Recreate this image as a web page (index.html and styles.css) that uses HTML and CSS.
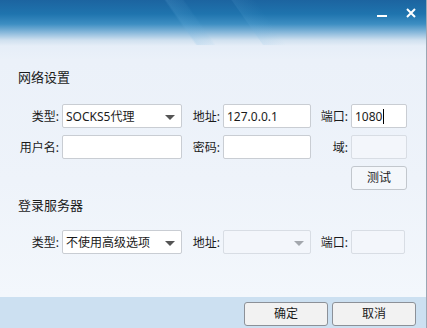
FILE: index.html
```html
<!DOCTYPE html>
<html>
<head>
    <meta charset="utf-8">
    <title>代理设置</title>
    <link rel="stylesheet" href="styles.css">
</head>
<body>
    <div class="window">
        <div class="titlebar">
            <span class="tb-min"></span>
            <svg class="tb-close" width="10" height="10" viewBox="0 0 10 10">
                <path d="M1 1 L9 9 M9 1 L1 9" stroke="#fff" stroke-width="2" fill="none"/>
            </svg>
        </div>
        <div class="content">
            <div class="section-title first">网络设置</div>
            <div class="form-grid">
                <span class="label">类型:</span>
                <div class="field select"><span class="value">SOCKS5代理</span><i class="arrow"></i></div>
                <span class="label">地址:</span>
                <div class="field"><span class="value">127.0.0.1</span></div>
                <span class="label">端口:</span>
                <div class="field"><span class="value">1080</span><span class="caret"></span></div>

                <span class="label">用户名:</span>
                <div class="field"></div>
                <span class="label">密码:</span>
                <div class="field"></div>
                <span class="label">域:</span>
                <div class="field disabled"></div>

                <div class="btn-test">测试</div>
            </div>

            <div class="section-title second">登录服务器</div>
            <div class="form-grid">
                <span class="label">类型:</span>
                <div class="field select"><span class="value">不使用高级选项</span><i class="arrow"></i></div>
                <span class="label">地址:</span>
                <div class="field select disabled"><span class="value"></span><i class="arrow"></i></div>
                <span class="label">端口:</span>
                <div class="field disabled port"></div>
            </div>
        </div>
        <div class="footer">
            <div class="btn">确定</div>
            <div class="btn">取消</div>
        </div>
    </div>
</body>
</html>
```

FILE: styles.css
```css
html, body {
    margin: 0;
    padding: 0;
}

body {
    font-family: "Noto Sans", "Noto Sans CJK SC", sans-serif;
    font-size: 12px;
    color: #1b1b1b;
}

.window {
    width: 426px;
    height: 328px;
    display: flex;
    flex-direction: column;
    border-right: 1px solid #9aa6b3;
    background:
        linear-gradient(55deg, transparent 0, transparent 160px, rgba(110, 180, 225, 0.18) 162px, rgba(110, 180, 225, 0.08) 175px, transparent 177px, transparent 215px, rgba(110, 180, 225, 0.12) 216px, transparent 235px) 0 0 / 100% 45px no-repeat,
        linear-gradient(to bottom, #1c64a0 0, #1f74ae 14px, #3d8ec2 24px, #8dbbdc 33px, #cfe0ef 40px, #e6eef8 46px, #ebf1f9 60px, #eef3fa 180px, #f3f7fc 296px);
}

.titlebar {
    height: 45px;
    flex: none;
    position: relative;
}

.tb-min {
    position: absolute;
    left: 377px;
    top: 15px;
    width: 10px;
    height: 2px;
    background: #fff;
}

.tb-close {
    position: absolute;
    left: 406px;
    top: 8px;
}

.content {
    flex: 1;
    padding-left: 18px;
}

.section-title {
    font-size: 13px;
    line-height: 18px;
    height: 18px;
}

.section-title.first {
    margin-top: 23px;
    margin-bottom: 18px;
}

.section-title.second {
    margin-top: 6px;
    margin-bottom: 16px;
}

.form-grid {
    display: grid;
    grid-template-columns: 41px 120px 35px 88px 34px 56px;
    grid-auto-rows: 24px;
    column-gap: 3px;
    row-gap: 7px;
    align-items: center;
}

.label {
    text-align: right;
    white-space: nowrap;
}

.field {
    box-sizing: border-box;
    height: 24px;
    background: #fff;
    border: 1px solid #c9cdd3;
    border-radius: 2px;
    display: flex;
    align-items: center;
    padding-left: 3px;
    position: relative;
}

.field .value {
    font-size: 12px;
    white-space: nowrap;
}

.field.disabled {
    background: #f3f6fb;
    border-color: #d8dde4;
}

.field.port {
    width: 54px;
}

.caret {
    display: inline-block;
    width: 1px;
    height: 15px;
    background: #000;
    margin-left: 1px;
}

.arrow {
    position: absolute;
    right: 6px;
    top: 10px;
    width: 0;
    height: 0;
    border-left: 5px solid transparent;
    border-right: 5px solid transparent;
    border-top: 5px solid #555;
}

.field.disabled .arrow {
    border-top-color: #a3a7ad;
}

.btn-test {
    grid-column: 6;
    box-sizing: border-box;
    height: 24px;
    border: 1px solid #c2c7cd;
    border-radius: 3px;
    background: #f4f7fb;
    text-align: center;
    line-height: 22px;
}

.footer {
    flex: none;
    height: 31px;
    background: #cce0f1;
    display: flex;
    justify-content: flex-end;
    align-items: flex-start;
    gap: 4px;
    padding-top: 5px;
    padding-right: 10px;
    box-sizing: border-box;
}

.btn {
    box-sizing: border-box;
    width: 84px;
    height: 24px;
    border: 1px solid #8c9198;
    border-radius: 3px;
    background: #f2f2f2;
    text-align: center;
    line-height: 22px;
}
```
